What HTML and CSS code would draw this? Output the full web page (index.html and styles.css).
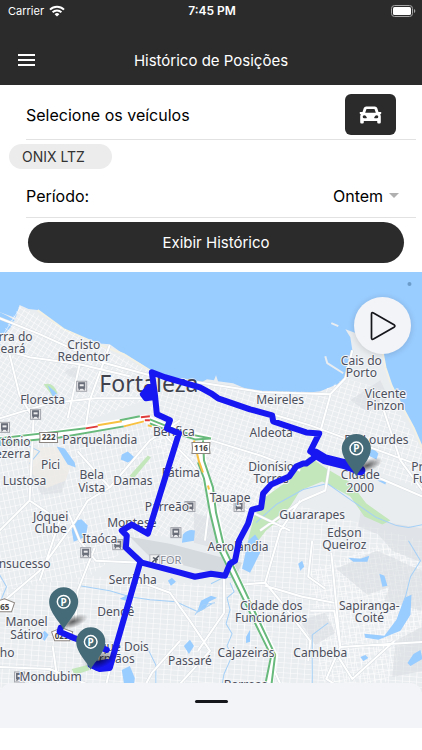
FILE: index.html
```html
<!DOCTYPE html>
<html lang="pt-BR">
<head>
    <meta charset="UTF-8">
    <meta name="viewport" content="width=device-width, initial-scale=1.0">
    <title>Histórico de Posições</title>
    <link rel="stylesheet" href="styles.css">
</head>
<body>
    <header class="header">
        <div class="status">
            <div class="carrier">
                <span>Carrier</span>
                <svg class="wifi" viewBox="0 0 16 12" aria-hidden="true">
                    <path d="M1 4.6a10 10 0 0 1 14 0M3.6 7.2a6.3 6.3 0 0 1 8.8 0" fill="none" stroke="#fff" stroke-width="2"/>
                    <path d="M8 11.6 5.6 9.2a3.4 3.4 0 0 1 4.8 0z" fill="#fff"/>
                </svg>
            </div>
            <span class="clock">7:45 PM</span>
            <svg class="battery" viewBox="0 0 25 12" aria-hidden="true">
                <rect x=".5" y=".5" width="21" height="11" rx="3" fill="none" stroke="#a5a5a5"/>
                <rect x="2" y="2" width="18" height="8" rx="1.5" fill="#fff"/>
                <path d="M23 4v4q1.3-.6 1.3-2T23 4z" fill="#a5a5a5"/>
            </svg>
        </div>
        <div class="navbar">
            <button class="menu" type="button" aria-label="Menu">
                <svg viewBox="0 0 17 12"><path d="M0 1h17M0 6h17M0 11h17" stroke="#fff" stroke-width="2"/></svg>
            </button>
            <h1 class="title">Histórico de Posições</h1>
        </div>
    </header>

    <form class="filters">
        <div class="row row-vehicle">
            <label for="vehicleButton">Selecione os veículos</label>
            <button class="vehicle-button" id="vehicleButton" type="button">
                <svg viewBox="0 0 22 18">
                    <path fill="#fff" fill-rule="evenodd" d="M6.6.5h8.8q1.7 0 2.3 1.6L19 6h2.2q.8 0 .6.9l-.2.8q-.1.5-.7.5h-.4q.8.9.8 2.2v5.8q0 1.3-1.2 1.3h-1.2q-1.2 0-1.2-1.3V15H4.3v1.2q0 1.3-1.2 1.3H1.9Q.7 17.5.7 16.2v-5.8q0-1.3.8-2.2h-.4q-.6 0-.7-.5L.2 6.900Q0 6 .8 6H3l1.300-3.900Q4.900.5 6.600.5zM7 3 5.700 6.800h10.600L15 3zM4.700 9.200a1.500 1.500 0 1 0 0 3h2q.9 0 .6-.8Q6.500 9.300 4.700 9.200zm12.600 0q-1.800.1-2.600 2.200-.3.800.6.800h2a1.500 1.500 0 1 0 0-3z"/>
                </svg>
            </button>
        </div>
        <span class="chip">ONIX LTZ</span>
        <div class="row row-period">
            <label for="period">Período:</label>
            <div class="select">
                <select id="period">
                    <option>Ontem</option>
                </select>
            </div>
        </div>
        <button class="submit" type="button">Exibir Histórico</button>
    </form>

    <main class="map">
        <svg class="map-canvas" viewBox="0 272 422 422" preserveAspectRatio="xMidYMin slice">
            <defs>
                <pattern id="gridA" width="6" height="5" patternUnits="userSpaceOnUse" patternTransform="rotate(17)">
                    <path class="street" d="M0 0H6M0 0V5"/>
                </pattern>
                <pattern id="gridB" width="5" height="7" patternUnits="userSpaceOnUse" patternTransform="rotate(-12)">
                    <path class="street" d="M0 0H5M0 0V7"/>
                </pattern>
                <pattern id="gridC" width="5" height="5" patternUnits="userSpaceOnUse" patternTransform="rotate(32)">
                    <path class="street" d="M0 0H5M0 0V5"/>
                </pattern>
                <pattern id="gridD" width="7" height="5" patternUnits="userSpaceOnUse" patternTransform="rotate(4)">
                    <path class="street" d="M0 0H7M0 0V5"/>
                </pattern>
                <radialGradient id="shade">
                    <stop offset="0" stop-opacity=".6"/>
                    <stop offset="1" stop-opacity="0"/>
                </radialGradient>
                <g id="pin">
                    <path fill="#456b78" d="M0 0C-2-6-14.500-17-14.500-28a14.500 14.500 0 0 1 29 0C14.500-17 2-6 0 0z"/>
                    <circle cy="-28" r="6.300" fill="none" stroke="#fff" stroke-width="1.500"/>
                    <text class="pin-letter" y="-24">P</text>
                </g>
                <g id="station">
                    <rect x="-5" y="-5" width="10" height="10" fill="#ececee" stroke="#a2a5ac"/>
                    <path d="M-3-3.500H3V2H-3zM-3 4 -1.500 2M3 4 1.500 2" fill="#686d78" stroke="#686d78"/>
                    <path d="M-2-2H2V0H-2z" fill="#ececee"/>
                </g>
            </defs>

            <!-- sea and land -->
            <rect class="sea" y="272" width="422" height="422"/>
            <path class="land" d="M0 312 8 315 16 318 20 305 29 309 38 310 50 320 64 329 80 336 96 343 110 344 124 354 140 363 150 370 163 374 190 382 198 384 207 379 214 380 216 375 218 381 233 383 247 389 265 392 285 393 303 393 320 391 337 384 346 376 349 365 352 350 350 337 345 329 356 333 374 341 382 351 385 367 391 385 401 405 413 427 422 448V694H0z"/>
            <path class="sea" d="M0 312 8 316 15 320 11 327 5 334 0 336z"/>
            <path class="beach" d="M382 351 385 367 391 385 401 405 413 427 422 448M38 310 64 329 96 343 124 354 150 370"/>

            <!-- street grids -->
            <path fill="url(#gridC)" d="M20 306 50 321 96 344 150 371 145 400 60 430 0 440V337z"/>
            <path fill="url(#gridA)" d="M150 371 198 384 250 390 320 392 345 378 385 390 422 450V490L330 450 290 500 255 520 215 510 150 440z"/>
            <path fill="url(#gridB)" d="M0 440 150 417 180 434 148 533 90 575 0 590z"/>
            <path fill="url(#gridC)" d="M180 434 290 470 240 540 150 535z"/>
            <path fill="url(#gridD)" d="M0 590 90 575 145 580 235 585 265 694H0z"/>
            <path fill="url(#gridD)" d="M245 540 300 505 350 520 422 540V694H265L230 585z"/>
            <path fill="url(#gridB)" d="M310 570 390 540 422 570V620L380 690 320 680z"/>

            <!-- open ground -->
            <path class="ground airfield" d="M130 536 170 543 242 562 236 576 205 570 150 556z"/>
            <path class="ground" d="M336 568l40-18 24 10-5 24-28 10zM362 500l26 22 34 6v34l-30-12-14-16-20-8zM78 640l20-8 16 10-6 20-24 6zM300 620l25-8 10 20-20 12zM395 640l27-14v44l-30 6zM65 372q6-6 15-4l-4 10-6-2zM30 470l16-14 22 16-6 20-20 2zM350 400l30-20 8 18-20 14zM194 512l18 6 6 30-24-6zM384 600l14-40 24 10v40z"/>
            <path class="campus" d="M28 448 60 446 72 462 66 480 46 488 30 470z"/>

            <!-- parks -->
            <path class="park" d="M309 456 326 468 350 482 366 503 390 520 382 524 364 516 350 496 322 481 300 490 290 506 278 520 266 530 258 540 248 539 254 516 266 496 288 480zM44 384q10-3 14 9l-5 3zM130 475l18-20 3 2-18 22zM72 668l16-4 2 5-15 5z"/>

            <!-- water -->
            <path class="water" d="M48 385l7 6 4 5-6 0zM57 446l8 2 10 14 1 5-8-3zM122 454l6-3 8 7-8 4-7-3zM72 530q2-12 10-11l6 6-2 11-12 5zM183 534q5-6 12-4l-1 10-12 2zM248 540l7-6 8 12-13 26-8-4zM122 669l8-4 5 12-2 17h-7zM184 645l6-6 4 6-5 8zM40 636l5-6 4 4-4 6zM298 563l4-3 2 6-4 4zM348 557l12 1 9-3-2 6-14 0zM379 573l5 2 3 10-5 1zM364 633l20 2 12-16 8-22 7-3-1 20-10 16-22 9-13-2zM407 662l6-9 7-4 2 9-12 7zM246 636l4-7v12l-4 1zM168 580l4-3 4 4-5 4zM120 598l8-4-2 6zM372 447l6 6-2 6-8-4zM377 480l9 0-1 4zM197 612l4-12 10-5 6 2-8 4-4 7zM360 656l5-2 3 3-5 3z"/>
            <path class="river" d="M230 582l4 9-7 6 3 12-4 14 6 10-5 12 5 10-8 18-4 22M0 446l20-5 20 10-10 12M0 574l7 12-5 12M422 524l-14 3-12-2-20-8-26-18-23-16-24 6-27 15-20 18M80 585l30 5 20 6 20 3 26 2 22 10 14-8M195 614l8-10 12-2M148 648l8 16 0 24M312 694l0-60 16-12M408 540l12 20-10 16-6 24M211 583l12-6 14-1"/>

            <!-- main roads -->
            <path class="road-case" d="M0 318 40 334 102 362 150 375 211 384M0 348 30 357 80 364 130 376M10 354 20 395 34 418 30 500M0 418 50 403 96 398 150 398M80 364 68 418M110 345 90 400 84 440M30 500 0 530M30 500 60 520 40 580M78 451 110 487 88 500 76 520 40 570 0 604M110 487 150 440 180 420M68 510 80 540 96 560 142 562M95 547 78 590 76 620M137 580 170 592 190 620 210 650 170 694M198 650 224 612 224 570M240 584 265 582 280 600 310 640 308 660M265 582 280 530 300 500M265 585 302 596 334 602M310 610 334 610 340 646 422 641M331 552 340 646 326 678 350 693M338 656 352 678 394 640M312 540 308 576 325 588M211 384 262 392 330 394 345 378M218 398 310 425 422 466M330 395 319 435 312 450M330 460 325 490 302 500 260 530M211 440 260 455 300 470M342 466 380 478 422 496M380 400 400 460 422 490M53 645 60 694M104 694 112 660M0 666 50 668 104 690M140 694 152 672 180 640M270 660 285 694M227 500 290 530M150 420 190 460 211 490 205 540M345 378 352 350"/>
            <path class="road" d="M0 318 40 334 102 362 150 375 211 384M0 348 30 357 80 364 130 376M10 354 20 395 34 418 30 500M0 418 50 403 96 398 150 398M80 364 68 418M110 345 90 400 84 440M30 500 0 530M30 500 60 520 40 580M78 451 110 487 88 500 76 520 40 570 0 604M110 487 150 440 180 420M68 510 80 540 96 560 142 562M95 547 78 590 76 620M137 580 170 592 190 620 210 650 170 694M198 650 224 612 224 570M240 584 265 582 280 600 310 640 308 660M265 582 280 530 300 500M265 585 302 596 334 602M310 610 334 610 340 646 422 641M331 552 340 646 326 678 350 693M338 656 352 678 394 640M312 540 308 576 325 588M211 384 262 392 330 394 345 378M218 398 310 425 422 466M330 395 319 435 312 450M330 460 325 490 302 500 260 530M211 440 260 455 300 470M342 466 380 478 422 496M380 400 400 460 422 490M53 645 60 694M104 694 112 660M0 666 50 668 104 690M140 694 152 672 180 640M270 660 285 694M227 500 290 530M150 420 190 460 211 490 205 540M345 378 352 350"/>
            <path class="jetty" d="M325 356l2 7 16 10M331 323l7 3"/>

            <!-- highways with traffic -->
            <path class="highway" d="M0 440 60 433 146 418 165 427 211 440M200 442 204 470 215 512 222 548 274 655 267 694"/>
            <path class="traffic" d="M0 438 60 431 86 428M120 420 140 416M0 443 60 437 124 426M150 423 170 431 195 439 211 438M150 419 170 427 190 434 211 438M203 440 204 460 213 487 216 512 224 546 275 654 270 694M198 462 204 478 210 512 219 549 271 655 263 694"/>
            <path class="traffic slow" d="M98 425 122 421M124 426 144 421M194 440 199 461 203 472M148 425l4 1M208 485l1 4"/>
            <path class="traffic jam" d="M86 428 98 426M141 417l9-1M145 420h5"/>

            <!-- stations and road shields -->
            <use href="#station" x="82" y="386"/>
            <use href="#station" x="36" y="414"/>
            <use href="#station" x="5" y="427"/>
            <use href="#station" x="190" y="506"/>
            <use href="#station" x="176" y="532"/>
            <use href="#station" x="118" y="544"/>
            <use href="#station" x="86" y="552"/>
            <use href="#station" x="239" y="506"/>
            <use href="#station" x="20" y="676"/>
            <g class="shield">
                <path d="M40 432h18q-1 5 0 10H40q1-5 0-10z"/>
                <text x="49" y="440">222</text>
                <path d="M192 442h18q-1 5 0 11h-18q1-6 0-11z"/>
                <text x="201" y="451">116</text>
                <path d="M-4 601 5 598 15 602 12 611H-4z"/>
                <text x="3" y="609">065</text>
                <path d="M52 631 62 627 73 631 70 640H55z"/>
                <text x="62" y="638">025</text>
            </g>
            <path d="M150 554h10v10h-10z" fill="#f2f2f2" stroke="#b5b8bd"/>
            <path d="M152 562l7-7M153 557l5 2M156 562l0-4" stroke="#555b66" stroke-width="1.500"/>

            <!-- district names -->
            <g class="labels end">
                <text x="33" y="341">Barra do</text><text x="26" y="353">Ceará</text>
                <text x="31" y="446">Antônio</text><text x="31" y="458">Bezerra</text>
                <text x="51" y="567">Bonsucesso</text><text x="15" y="656">Jardinho</text>
                <text x="149" y="650">Parque Dois</text><text x="135" y="662">Irmãos</text>
                <text x="408" y="444">De Lourdes</text>
            </g>
            <g class="labels">
                <text x="84" y="349">Cristo</text><text x="84" y="361">Redentor</text>
                <text x="43" y="404">Floresta</text>
                <text class="city" x="149" y="392">Fortaleza</text>
                <text x="280" y="404">Meireles</text>
                <text x="361" y="365">Cais do</text><text x="361" y="377">Porto</text>
                <text x="385" y="398">Vicente</text><text x="385" y="410">Pinzon</text>
                <text x="271" y="437">Aldeota</text>
                <text x="100" y="444">Parquelândia</text>
                <text x="174" y="436">Benfica</text>
                <text x="51" y="469">Pici</text>
                <text x="25" y="485">Lustosa</text>
                <text x="92" y="479">Bela</text><text x="92" y="491">Vista</text>
                <text x="133" y="485">Damas</text>
                <text x="181" y="477">Fátima</text>
                <text x="167" y="510">Parreão</text>
                <text x="132" y="526">Montese</text>
                <text x="51" y="520">Jóquei</text><text x="51" y="532">Clube</text>
                <text x="100" y="542">Itaóca</text>
                <text x="271" y="471">Dionísio</text><text x="271" y="483">Torres</text>
                <text x="360" y="479">Cidade</text><text x="360" y="491">2000</text>
                <text x="230" y="501">Tauape</text>
                <text x="312" y="518">Guararapes</text>
                <text x="344" y="536">Edson</text><text x="344" y="548">Queiroz</text>
                <text x="434" y="471">Praia do</text><text x="431" y="483">Futuro</text>
                <text class="airport" x="171" y="563">FOR</text>
                <text x="238" y="550">Aerolândia</text>
                <text x="133" y="583">Serrinha</text>
                <text x="116" y="615">Dendê</text>
                <text x="27" y="625">Manoel</text><text x="27" y="638">Sátiro</text>
                <text x="51" y="680">Mondubim</text>
                <text x="190" y="664">Passaré</text>
                <text x="271" y="609">Cidade dos</text><text x="271" y="621">Funcionários</text>
                <text x="246" y="656">Cajazeiras</text>
                <text x="320" y="656">Cambeba</text>
                <text x="369" y="609">Sapiranga-</text><text x="369" y="621">Coité</text>
                <text x="246" y="688">Barroso</text>
            </g>

            <!-- travelled route -->
            <path class="route" d="M152 372 165 377 200 387 211 393 218 398 250 409 272 415 273 421 306 432 319 433 310 451 317 455 306 463 303 463 296 466 289 476 271 484 263 493 261 507 252 509 248 523 239 540 235 560 230 563 225 575 211 573 195 576 180 572 142 562 126 547 127 535 122 530 132 524 148 533 179 433 167 428 170 420 157 414 155 394 152 372M146 398 143 394 149 387 153 397zM140 563 110 667 100 668 91 664M61 627 60 631 74 637 91 643 107 649"/>
            <path class="route thick" d="M315 453 325 459 345 464 360 470M147 394h4M98 665 108 663"/>

            <!-- parking stops -->
            <ellipse cx="367" cy="465" rx="16" ry="6" transform="rotate(-20 367 465)" fill="url(#shade)"/>
            <ellipse cx="73" cy="621" rx="16" ry="6" transform="rotate(-20 73 621)" fill="url(#shade)"/>
            <ellipse cx="100" cy="659" rx="16" ry="8" transform="rotate(-20 100 659)" fill="url(#shade)"/>
            <use href="#pin" x="356" y="476"/>
            <use href="#pin" x="64" y="629"/>
            <use href="#pin" x="91" y="669"/>
            <circle cx="409" cy="284" r="2" fill="#6c9dca"/>
        </svg>
        <button class="play" type="button" aria-label="Reproduzir">
            <svg viewBox="0 0 26 30"><path d="M1.500 3.200v23.600q0 2.200 2 1.200L24 16.300q1.800-1.300 0-2.600L3.500 2q-2-1-2 1.200z" fill="none" stroke="#15151c" stroke-width="1.700"/></svg>
        </button>
    </main>

    <section class="sheet">
        <button class="handle" type="button" aria-label="Expandir"></button>
    </section>
</body>
</html>
```

FILE: styles.css
```css
* {
    box-sizing: border-box;
}
body {
    margin: 0;
    min-height: 100vh;
    display: flex;
    flex-direction: column;
    font-family: Inter, "Liberation Sans", sans-serif;
    background-color: #fff;
    color: #000;
}
button,
select {
    font-family: inherit;
    border: none;
    cursor: pointer;
}
svg {
    display: block;
}

/* header */
.header {
    background-color: #2b2b2b;
    color: #fff;
}
.status {
    display: grid;
    grid-template-columns: 1fr auto 1fr;
    align-items: center;
    height: 21px;
    padding: 0 6px 0 8px;
    font-size: 11px;
}
.carrier {
    display: flex;
    align-items: center;
    gap: 5px;
}
.wifi {
    width: 16px;
    height: 12px;
}
.clock {
    font-size: 12px;
    font-weight: 600;
}
.battery {
    width: 25px;
    height: 12px;
    justify-self: end;
}
.navbar {
    display: grid;
    grid-template-columns: 1fr auto 1fr;
    align-items: center;
    padding: 14px 9px 0;
    height: 64px;
}
.menu {
    width: 36px;
    height: 36px;
    padding: 12px 9px;
    background: none;
}
.menu svg {
    width: 17px;
    height: 12px;
}
.title {
    margin: 0;
    font-size: 15px;
    font-weight: 400;
}

/* filters */
.filters {
    padding-bottom: 9px;
    font-size: 16px;
}
.row {
    display: flex;
    align-items: center;
    justify-content: space-between;
    margin: 0 6px 0 26px;
    border-bottom: 1px solid #e2e2e2;
}
.row-vehicle {
    height: 55px;
    padding: 5px 20px 0 0;
}
.row-period {
    height: 48px;
    padding: 4px 17px 0 0;
}
.vehicle-button {
    width: 51px;
    height: 41px;
    padding: 0 14px;
    border-radius: 6px;
    background-color: #2b2b2b;
}
.vehicle-button svg {
    width: 23px;
    height: 18px;
}
.chip {
    display: block;
    width: fit-content;
    margin: 4px 0 1px 9px;
    padding: 0 27px 0 13px;
    border-radius: 13px;
    background-color: #ececec;
    color: #333;
    font-size: 14px;
    line-height: 25px;
}
.select {
    display: flex;
    align-items: center;
    gap: 5px;
}
.select::after {
    content: "";
    border: 5px solid transparent;
    border-top-color: #b0b0b0;
    border-bottom: none;
}
.select select {
    appearance: none;
    padding: 0;
    background: none;
    color: #000;
    font-size: 16px;
}
.submit {
    display: block;
    width: calc(100% - 46px);
    height: 41px;
    margin: 4px 18px 0 28px;
    border-radius: 21px;
    background-color: #2b2b2b;
    color: #fff;
    font-size: 15px;
}

/* map */
.map {
    position: relative;
    flex: 1;
    min-height: 300px;
    margin-bottom: -12px;
    overflow: hidden;
}
.map-canvas {
    position: absolute;
    width: 100%;
    height: 100%;
}
.play {
    position: absolute;
    top: 25px;
    right: 11px;
    width: 57px;
    height: 57px;
    padding: 0 0 0 16px;
    border-radius: 50%;
    background-color: #f3f4f8;
    box-shadow: 0 1px 6px rgba(0, 0, 0, 0.15);
}
.play svg {
    width: 26px;
    height: 30px;
}
.sea,
.water {
    fill: #99ccff;
}
.land {
    fill: #eaedf0;
}
.ground {
    fill: #d5dade;
    opacity: 0.5;
}
.airfield {
    opacity: 1;
}
.campus {
    fill: #f0ece7;
    opacity: 0.8;
}
.park {
    fill: #c3e6bb;
}
.beach,
.river,
.street,
.road,
.road-case,
.highway,
.traffic,
.jetty,
.route {
    fill: none;
    stroke-linejoin: round;
}
.beach {
    stroke: #f3f1e5;
    stroke-width: 2;
}
.street {
    stroke: #fff;
    stroke-width: 1;
}
.river {
    stroke: #a5d0f7;
    stroke-width: 1;
}
.road-case {
    stroke: #d8dde1;
    stroke-width: 3;
}
.road {
    stroke: #fff;
    stroke-width: 2;
}
.jetty {
    stroke: #e9edf0;
    stroke-width: 2;
}
.highway {
    stroke: #fff;
    stroke-width: 8;
}
.traffic {
    stroke: #68b97c;
    stroke-width: 2;
}
.slow {
    stroke: #f8c141;
}
.jam {
    stroke: #df3b3b;
}
.shield {
    fill: #fff;
    stroke: #8c8580;
}
.shield text {
    fill: #444;
    stroke: none;
    font-family: "Noto Sans", sans-serif;
    font-size: 8px;
    font-weight: 700;
    text-anchor: middle;
}
.labels {
    fill: #4c4f5c;
    stroke: #f4f6f8;
    stroke-width: 2px;
    paint-order: stroke;
    font-family: "Noto Sans", sans-serif;
    font-size: 12px;
    text-anchor: middle;
}
.end {
    text-anchor: end;
}
.city {
    font-size: 23px;
    fill: #3f424d;
    stroke-width: 1px;
}
.airport {
    fill: #858994;
    font-size: 11px;
}
.route {
    stroke: #1717f2;
    stroke-width: 6;
    stroke-linecap: round;
}
.thick {
    stroke-width: 10;
}
.pin-letter {
    fill: #fff;
    font-family: "Noto Sans", sans-serif;
    font-size: 10px;
    font-weight: 700;
    text-anchor: middle;
}

/* bottom sheet */
.sheet {
    position: relative;
    height: 45px;
    margin-bottom: 22px;
    border-radius: 12px 12px 0 0;
    background-color: #f3f4f8;
    display: flex;
    justify-content: center;
}
.handle {
    width: 33px;
    height: 3px;
    margin-top: 17px;
    padding: 0;
    border-radius: 2px;
    background-color: #15151c;
}
```
